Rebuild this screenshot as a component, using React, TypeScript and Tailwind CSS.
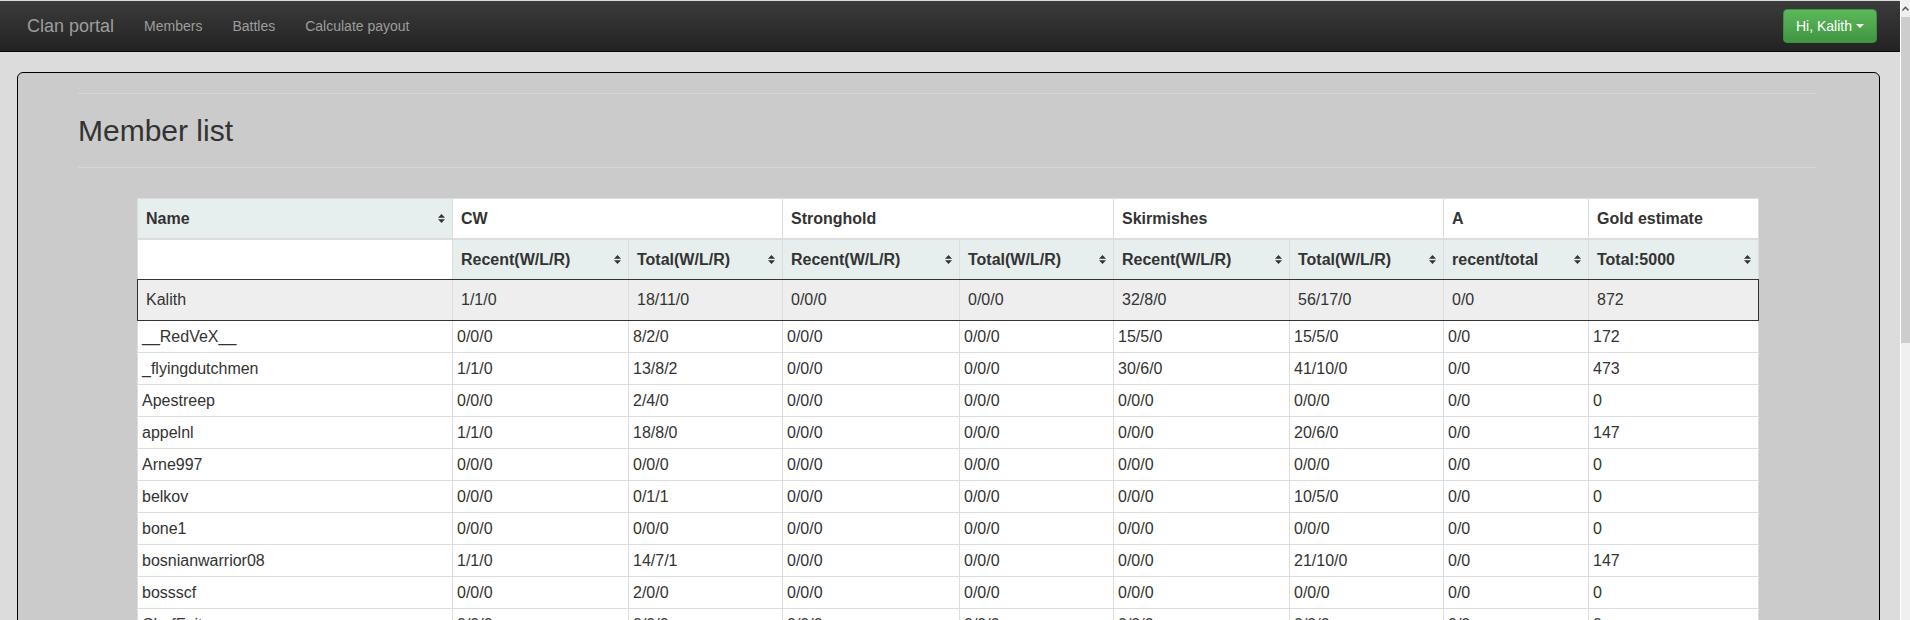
import React from "react";

const cols =
  "grid grid-cols-[316px_176px_154px_177px_154px_176px_154px_145px_170px]";

function SortIcon() {
  return (
    <svg width="7" height="9" viewBox="0 0 7 9" className="shrink-0">
      <path d="M0 3.8L3.5 0L7 3.8Z M0 5.2L3.5 9L7 5.2Z" fill="#333" />
    </svg>
  );
}

type Row = [string, string, string, string, string, string, string, string, string];

const rows: Row[] = [
  ["__RedVeX__", "0/0/0", "8/2/0", "0/0/0", "0/0/0", "15/5/0", "15/5/0", "0/0", "172"],
  ["_flyingdutchmen", "1/1/0", "13/8/2", "0/0/0", "0/0/0", "30/6/0", "41/10/0", "0/0", "473"],
  ["Apestreep", "0/0/0", "2/4/0", "0/0/0", "0/0/0", "0/0/0", "0/0/0", "0/0", "0"],
  ["appelnl", "1/1/0", "18/8/0", "0/0/0", "0/0/0", "0/0/0", "20/6/0", "0/0", "147"],
  ["Arne997", "0/0/0", "0/0/0", "0/0/0", "0/0/0", "0/0/0", "0/0/0", "0/0", "0"],
  ["belkov", "0/0/0", "0/1/1", "0/0/0", "0/0/0", "0/0/0", "10/5/0", "0/0", "0"],
  ["bone1", "0/0/0", "0/0/0", "0/0/0", "0/0/0", "0/0/0", "0/0/0", "0/0", "0"],
  ["bosnianwarrior08", "1/1/0", "14/7/1", "0/0/0", "0/0/0", "0/0/0", "21/10/0", "0/0", "147"],
  ["bossscf", "0/0/0", "2/0/0", "0/0/0", "0/0/0", "0/0/0", "0/0/0", "0/0", "0"],
  ["ChefFait", "0/0/0", "0/0/0", "0/0/0", "0/0/0", "0/0/0", "0/0/0", "0/0", "0"],
];

const kalith: Row = ["Kalith", "1/1/0", "18/11/0", "0/0/0", "0/0/0", "32/8/0", "56/17/0", "0/0", "872"];

const subHeads = [
  "Recent(W/L/R)",
  "Total(W/L/R)",
  "Recent(W/L/R)",
  "Total(W/L/R)",
  "Recent(W/L/R)",
  "Total(W/L/R)",
  "recent/total",
  "Total:5000",
];

export default function App() {
  return (
    <div className="flex h-[620px] w-[1910px] overflow-hidden bg-[#dcdcdc] font-['Liberation_Sans',Arial,sans-serif] text-[14px] text-[#333]">
      <div className="flex w-[1900px] flex-col">
        {/* Navbar */}
        <nav className="mt-px flex h-[51px] shrink-0 items-center border-b border-[#080808] bg-linear-to-b from-[#3c3c3c] to-[#222222] pl-[27px]">
          <span className="mr-[15px] text-[18px] text-[#9d9d9d]">Clan portal</span>
          <span className="px-[15px] text-[#9d9d9d]">Members</span>
          <span className="px-[15px] text-[#9d9d9d]">Battles</span>
          <span className="px-[15px] text-[#9d9d9d]">Calculate payout</span>
          <div className="ml-auto mr-[23px] flex h-[34px] items-center rounded-[4px] border border-[#3e8f3e] bg-linear-to-b from-[#5cb85c] to-[#419641] pl-[12px] pr-[12px] text-white">
            <span>Hi, Kalith</span>
            <span className="ml-[4px] h-0 w-0 border-x-[4px] border-t-[4px] border-x-transparent border-t-white" />
          </div>
        </nav>

        {/* Panel */}
        <div className="ml-[17px] mr-[20px] mt-[20px] h-[900px] shrink-0 rounded-[6px] border border-black bg-[#cbcbcb] pt-[20px] pl-[60px] pr-[62px]">
          <div className="h-px bg-[#d6d6d6]" />
          <div className="border-b border-[#d6d6d6] pt-[20px] pb-[20px]">
            <h1 className="h-[33px] text-[30px] font-normal leading-[33px] text-[#333]">Member list</h1>
          </div>

          <div className="ml-[59px] mt-[30px] w-[1622px] text-[16px]">
            {/* Header row 1 */}
            <div className={`${cols} h-[42px] font-bold`}>
              <div className="flex items-center justify-between border-x border-t border-b-2 border-[#dddddd] bg-[#e6eeee] pl-[8px] pr-[7px]">
                <span>Name</span>
                <SortIcon />
              </div>
              <div className="col-span-2 flex items-center border-r border-t border-b-2 border-[#dddddd] bg-white pl-[8px]">CW</div>
              <div className="col-span-2 flex items-center border-r border-t border-b-2 border-[#dddddd] bg-white pl-[8px]">Stronghold</div>
              <div className="col-span-2 flex items-center border-r border-t border-b-2 border-[#dddddd] bg-white pl-[8px]">Skirmishes</div>
              <div className="flex items-center border-r border-t border-b-2 border-[#dddddd] bg-white pl-[8px]">A</div>
              <div className="flex items-center border-r border-t border-b-2 border-[#dddddd] bg-white pl-[8px]">Gold estimate</div>
            </div>

            {/* Header row 2 */}
            <div className={`${cols} h-[39px] font-bold`}>
              <div className="border-x border-[#dddddd] bg-white" />
              {subHeads.map((h, i) => (
                <div
                  key={i}
                  className="flex items-center justify-between border-r border-[#dddddd] bg-[#e6eeee] pl-[8px] pr-[7px]"
                >
                  <span>{h}</span>
                  <SortIcon />
                </div>
              ))}
            </div>

            {/* Kalith row */}
            <div className={`${cols} h-[42px] border-y border-[#333333] bg-[#eeeeee]`}>
              {kalith.map((c, i) => (
                <div
                  key={i}
                  className={`flex items-center pl-[8px] ${
                    i === 0
                      ? "border-l border-r border-l-[#333333] border-r-[#dddddd]"
                      : i === 8
                      ? "border-r border-[#333333]"
                      : "border-r border-[#dddddd]"
                  }`}
                >
                  {c}
                </div>
              ))}
            </div>

            {/* Data rows */}
            {rows.map((r, ri) => (
              <div key={ri} className={`${cols} h-[32px] bg-white`}>
                {r.map((c, i) => (
                  <div
                    key={i}
                    className={`flex items-center border-b border-r border-[#dddddd] pl-[4px] ${
                      i === 0 ? "border-l" : ""
                    }`}
                  >
                    {c}
                  </div>
                ))}
              </div>
            ))}
          </div>
        </div>
      </div>

      {/* Scrollbar */}
      <div className="flex h-[620px] w-[10px] flex-col border-l border-white bg-[#f0f0f0]">
        <div className="flex h-[17px] items-center justify-center">
          <svg width="7" height="5" viewBox="0 0 7 5">
            <path d="M0.5 4.5L3.5 1.2L6.5 4.5" fill="none" stroke="#505050" strokeWidth="1.3" />
          </svg>
        </div>
        <div className="h-[326px] bg-[#cdcdcd]" />
      </div>
    </div>
  );
}
